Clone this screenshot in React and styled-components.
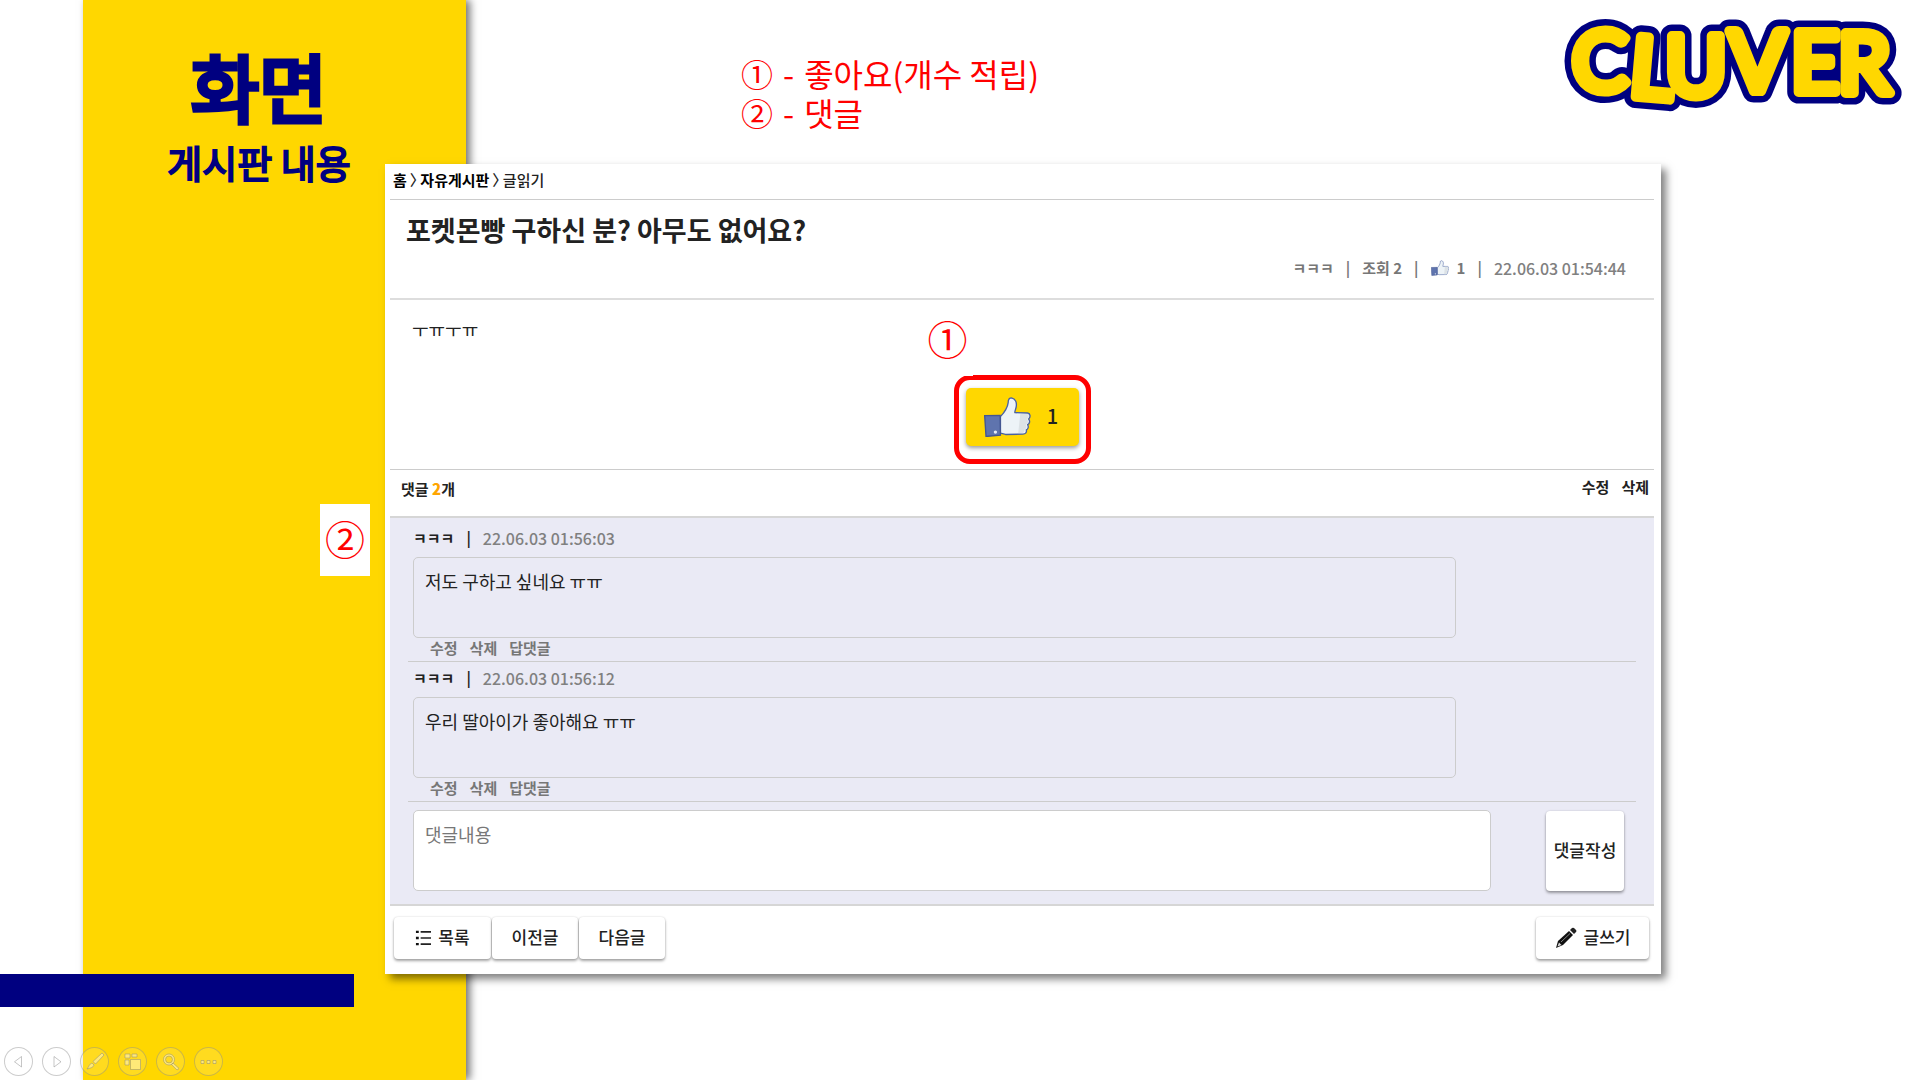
import React from 'react';
import styled, { createGlobalStyle } from 'styled-components';

const GlobalStyle = createGlobalStyle`
	* {
		box-sizing: border-box;
	}

	body {
		margin: 0;
		background: white;
		color: #222;
		font-family: 'Noto Sans CJK KR', sans-serif;
	}

	button, textarea {
		font-family: inherit;
		color: inherit;
	}

	button {
		cursor: pointer;
	}
`

const Slide = styled.div`
	display: grid;
	grid-template-columns: 83px 302px 81px 1fr 259px;
	grid-template-rows: 164px auto 1fr;
	min-height: 100vh;
	overflow: hidden;
`

const Sidebar = styled.aside`
	grid-column: 2 / 4;
	grid-row: 1 / 4;
	display: flex;
	flex-direction: column;
	align-items: center;
	padding: 40px 31px 0 0;
	background: gold;
	box-shadow: 4px 0 8px rgba(0, 0, 0, 0.55);
	color: navy;
`

const SlideTitle = styled.h1`
	margin: 0;
	font-size: 74px;
	line-height: 90px;
	font-weight: 400;
	stroke-linejoin: round;
	-webkit-text-stroke: 5px navy;
`

const SlideSubtitle = styled.p`
	margin: 8px 0 0;
	font-size: 38px;
	line-height: 48px;
	font-weight: 400;
	stroke-linejoin: round;
	-webkit-text-stroke: 2px navy;
`

const Header = styled.header`
	grid-column: 4 / 6;
	grid-row: 1;
	display: flex;
	justify-content: space-between;
	align-items: flex-start;
	padding: 12px 20px 0 275px;
`

const Legend = styled.ul`
	margin: 0;
	padding: 42px 0 0;
	list-style: none;
	color: red;
	font-size: 32px;
	line-height: 39px;
	white-space: nowrap;

	li {
		display: flex;
		gap: 10px;
	}
`

const Board = styled.main`
	grid-column: 3 / 5;
	grid-row: 2;
	position: relative;
	z-index: 1;
	padding: 0 7px 15px 5px;
	background: white;
	box-shadow: 5px 5px 8px rgba(0, 0, 0, 0.5);
`

const Breadcrumb = styled.nav`
	display: flex;
	gap: 3px;
	height: 36px;
	padding: 5px 3px 0;
	border-bottom: 1px solid #ccc;
	font-size: 15px;
	line-height: 22px;
	font-weight: 500;

	a {
		color: black;
		font-weight: 700;
		text-decoration: none;
	}
`

const Chevron = styled.span`
	font-feature-settings: 'halt';
`

const PostHead = styled.div`
	height: 100px;
	padding: 10px 28px 0 16px;
	border-bottom: 2px solid #ddd;
`

const PostTitle = styled.h2`
	margin: 0;
	font-size: 27px;
	line-height: 40px;
	font-weight: 700;
`

const PostMeta = styled.div`
	display: flex;
	justify-content: flex-end;
	align-items: center;
	gap: 12px;
	margin-top: 6px;
	color: #777;
	font-size: 15px;
	line-height: 24px;
	font-weight: 700;

	span {
		display: flex;
		align-items: center;
		gap: 8px;
	}
`

const Time = styled.time`
	color: #808080;
	font-size: 16px;
	font-weight: 500;
`

const PostBody = styled.div`
	display: flex;
	flex-direction: column;
	height: 170px;
	padding: 15px 0 23px;
	border-bottom: 1px solid #ccc;

	p {
		margin: 0;
		padding: 0 22px;
		font-size: 18px;
		line-height: 28px;
	}
`

const LikeArea = styled.div`
	position: relative;
	align-self: center;
	margin-top: auto;
`

const LikeButton = styled.button`
	display: flex;
	align-items: center;
	justify-content: center;
	gap: 16px;
	width: 113px;
	height: 58px;
	padding: 0 7px 0 5px;
	border: 0;
	border-radius: 5px;
	background: gold;
	box-shadow: 0 2px 4px rgba(0, 0, 0, 0.4);
	font-size: 20px;
	font-weight: 500;

	span {
		padding-bottom: 4px;
	}
`

const Highlight = styled.div`
	position: absolute;
	inset: -13px -12px -18px -12px;
	border: 5px solid red;
	border-radius: 16px;
	pointer-events: none;
`

const Marker = styled.span`
	position: absolute;
	top: ${props => props.$top};
	left: ${props => props.$left};
	display: flex;
	align-items: center;
	justify-content: center;
	width: 50px;
	height: 72px;
	padding-bottom: 4px;
	background: white;
	color: red;
	font-size: 40px;
	line-height: 50px;
`

const CommentBar = styled.div`
	display: flex;
	justify-content: space-between;
	align-items: flex-start;
	height: 48px;
	padding: 7px 5px 0 11px;
	border-bottom: 2px solid #d6d6d6;
	font-size: 15px;
	line-height: 24px;
	font-weight: 700;

	b {
		color: orange;
	}
`

const TextButtons = styled.div`
	display: flex;
	gap: 12px;
	padding: ${props => props.$indent ? '0 17px' : '0'};
	color: ${props => props.$indent ? '#777' : 'inherit'};
`

const TextButton = styled.button`
	padding: 0;
	border: 0;
	background: none;
	font-size: 15px;
	line-height: 20px;
	font-weight: 700;
`

const Comments = styled.section`
	position: relative;
	padding: 0 18px 13px 18px;
	border-bottom: 2px solid #d6d6d6;
	background: #eaeaf5;
`

const Comment = styled.article`
	height: 140px;
	padding: 4px 0 0 5px;
	border-bottom: 1px solid #ccc;

	&:first-of-type {
		height: 144px;
		padding-top: 8px;
	}
`

const CommentMeta = styled.div`
	display: flex;
	gap: 12px;
	font-size: 15px;
	line-height: 24px;
	font-weight: 700;
`

const CommentText = styled.p`
	width: calc(100% - 180px);
	height: 81px;
	margin: 7px 0 0;
	padding: 9px 11px;
	border: 1px solid #ccc;
	border-radius: 5px;
	font-size: 18px;
	line-height: 28px;
`

const CommentForm = styled.form`
	display: flex;
	gap: 55px;
	padding: 8px 12px 0 5px;
`

const CommentInput = styled.textarea`
	flex: 1;
	height: 81px;
	padding: 9px 11px;
	border: 1px solid #ccc;
	border-radius: 5px;
	background: white;
	font-size: 18px;
	line-height: 28px;
	resize: none;

	&::placeholder {
		color: #777;
	}
`

const Actions = styled.div`
	display: flex;
	justify-content: space-between;
	padding: 11px 5px 0 4px;
`

const ButtonGroup = styled.div`
	display: flex;
	gap: 1px;
`

const Button = styled.button`
	display: flex;
	align-items: center;
	justify-content: center;
	gap: 7px;
	width: ${props => props.$width || '86px'};
	height: ${props => props.$tall ? '80px' : '42px'};
	margin-top: ${props => props.$tall ? '1px' : '0'};
	padding: 0;
	border: 0;
	border-radius: 4px;
	background: white;
	box-shadow: 0 2px 3px rgba(0, 0, 0, 0.35), 0 0 2px rgba(0, 0, 0, 0.15);
	font-size: 17px;
	font-weight: 500;
	white-space: nowrap;

	span {
		padding-bottom: 3px;
	}
`

const Footer = styled.footer`
	grid-column: 1 / 3;
	grid-row: 3;
	z-index: 1;
	display: flex;
	flex-direction: column;
	justify-content: space-between;
`

const Bar = styled.div`
	width: 354px;
	height: 33px;
	background: navy;
`

const Controls = styled.div`
	display: flex;
	gap: 9px;
	padding: 0 0 4px 4px;
`

const Control = styled.button`
	width: 29px;
	height: 29px;
	padding: 0;
	border: 1px solid rgba(128, 128, 128, 0.4);
	border-radius: 50%;
	background: rgba(255, 255, 255, 0.12);

	svg {
		display: block;
		fill: rgba(255, 255, 255, 0.4);
		stroke: rgba(128, 128, 128, 0.45);
	}
`

const LogoSvg = styled.svg`
	overflow: visible;
`

function Logo() {
	return (
		<LogoSvg width="344" height="98" viewBox="0 0 344 98" role="img" aria-label="CLUVER">
			<defs>
				<text
					id="logo-letters"
					x="16 72 109 173 235 282"
					y="79 84 84 79 80 81"
					rotate="0 5 0 0 0 0"
					fontFamily="Lato"
					fontWeight="400"
					fontSize="84"
					strokeLinejoin="round"
				>
					CLUVER
				</text>
			</defs>
			<use href="#logo-letters" fill="navy" stroke="navy" strokeWidth="23" />
			<use href="#logo-letters" fill="gold" stroke="gold" strokeWidth="10" />
		</LogoSvg>
	);
}

function Thumb({ width, height }) {
	return (
		<svg width={width} height={height} viewBox="0 0 140 118" aria-hidden="true">
			<path d="M49 58 C60 46 70 32 72 16 C72 4 76 2 82 2 C94 4 98 16 96 28 C95 36 91 42 92 46 L130 47 C139 49 139 60 133 65 C138 71 136 79 130 82 C134 89 131 95 126 97 C128 105 124 110 116 110 L64 111 L49 107 Z" fill="#edf3f7" stroke="#4a62a0" strokeWidth="4" strokeLinejoin="round" />
			<path d="M108 50 L128 50 C136 52 134 62 128 65 C134 72 131 79 124 82 C129 90 125 95 120 97 C121 104 118 107 112 107 L102 107 Z" fill="#dce2e6" />
			<path d="M2 55 L48 54 L49 113 L6 117 Z" fill="#5f74ae" stroke="#435691" strokeWidth="4" />
			<circle cx="34" cy="104" r="5" fill="#e6ecf5" />
		</svg>
	);
}

function ListIcon() {
	return (
		<svg width="16" height="16" viewBox="0 0 17 17" aria-hidden="true">
			<path d="M1 2h3M1 8.500h3M1 15h3" stroke="#111" strokeWidth="2.500" />
			<path d="M6 2h11M6 8.500h11M6 15h11" stroke="#222" strokeWidth="1.800" />
		</svg>
	);
}

function PencilIcon() {
	return (
		<svg width="22" height="22" viewBox="0 0 22 22" aria-hidden="true">
			<path d="M1 21 L3 14 L14 4 L18 8 L8 18 Z" fill="#111" />
			<path d="M2.500 19.500 L4 15.500 L6.500 18 Z" fill="#ddd" />
			<path d="M15 3 L17 1 Q18 .5 19 1 L21 3 Q22 4 21 5 L19 7 Z" fill="#222" />
			<path d="M6 15 L15 6.500" stroke="#888" strokeWidth="1" />
		</svg>
	);
}

const CONTROLS = [
	{ label: '이전', icon: <path d="M16.500 8.500v10.500l-7-5.200z" /> },
	{ label: '다음', icon: <path d="M11 8.500v10.500l7-5.200z" /> },
	{ label: '펜', icon: <path d="M21 5l2 2-8.500 9-2.500-2.500zM11 15l2 2c-1 3-4 3-7 4 2-2 2-5 5-6z" /> },
	{ label: '모든 슬라이드', icon: <path d="M6 6h5v4h-5zM13 6h5v3h-5zM6 12h4v5h-4zM11.500 11.500h10v10h-10z" /> },
	{
		label: '확대',
		icon: <path d="M12 6a5.500 5.500 0 1 0 0 11a5.500 5.500 0 1 0 0-11zM12 8a3.500 3.500 0 1 1 0 7a3.500 3.500 0 1 1 0-7zM16 15l6 5.500-2 1.500-5.500-5.500z" fillRule="evenodd" />,
	},
	{ label: '더 보기', icon: <path d="M6 12.500h3v3h-3zM12 12.500h3v3h-3zM18 12.500h3v3h-3z" /> },
];

const COMMENTS = [
	{ author: 'ㅋㅋㅋ', date: '22.06.03 01:56:03', text: '저도 구하고 싶네요 ㅠㅠ' },
	{ author: 'ㅋㅋㅋ', date: '22.06.03 01:56:12', text: '우리 딸아이가 좋아해요 ㅠㅠ' },
];

function App() {
	return (
		<Slide>
			<GlobalStyle />
			<Sidebar>
				<SlideTitle>화면</SlideTitle>
				<SlideSubtitle>게시판 내용</SlideSubtitle>
			</Sidebar>
			<Header>
				<Legend>
					<li><span>①</span><span>-</span><span>좋아요(개수 적립)</span></li>
					<li><span>②</span><span>-</span><span>댓글</span></li>
				</Legend>
				<Logo />
			</Header>
			<Board>
				<Breadcrumb>
					<a href="#home">홈</a>
					<Chevron>〉</Chevron>
					<a href="#board">자유게시판</a>
					<Chevron>〉</Chevron>
					<span>글읽기</span>
				</Breadcrumb>
				<PostHead>
					<PostTitle>포켓몬빵 구하신 분? 아무도 없어요?</PostTitle>
					<PostMeta>
						<span>ㅋㅋㅋ</span>
						<span>|</span>
						<span>조회 2</span>
						<span>|</span>
						<span><Thumb width="18" height="16" />1</span>
						<span>|</span>
						<Time>22.06.03 01:54:44</Time>
					</PostMeta>
				</PostHead>
				<PostBody>
					<p>ㅜㅠㅜㅠ</p>
					<LikeArea>
						<LikeButton type="button"><Thumb width="47" height="40" /><span>1</span></LikeButton>
						<Highlight />
						<Marker $top="-84px" $left="-43px">①</Marker>
					</LikeArea>
				</PostBody>
				<CommentBar>
					<span>댓글 <b>2</b>개</span>
					<TextButtons>
						<TextButton type="button">수정</TextButton>
						<TextButton type="button">삭제</TextButton>
					</TextButtons>
				</CommentBar>
				<Comments>
					<Marker $top="-14px" $left="-70px">②</Marker>
					{COMMENTS.map(comment => (
						<Comment key={comment.date}>
							<CommentMeta>
								<span>{comment.author}</span>
								<span>|</span>
								<Time>{comment.date}</Time>
							</CommentMeta>
							<CommentText>{comment.text}</CommentText>
							<TextButtons $indent>
								<TextButton type="button">수정</TextButton>
								<TextButton type="button">삭제</TextButton>
								<TextButton type="button">답댓글</TextButton>
							</TextButtons>
						</Comment>
					))}
					<CommentForm>
						<CommentInput placeholder="댓글내용" aria-label="댓글내용" />
						<Button type="button" $width="78px" $tall><span>댓글작성</span></Button>
					</CommentForm>
				</Comments>
				<Actions>
					<ButtonGroup>
						<Button type="button" $width="97px"><ListIcon /><span>목록</span></Button>
						<Button type="button"><span>이전글</span></Button>
						<Button type="button"><span>다음글</span></Button>
					</ButtonGroup>
					<Button type="button" $width="113px"><PencilIcon /><span>글쓰기</span></Button>
				</Actions>
			</Board>
			<Footer>
				<Bar />
				<Controls>
					{CONTROLS.map(control => (
						<Control key={control.label} type="button" aria-label={control.label}>
							<svg width="27" height="27" viewBox="0 0 27 27">{control.icon}</svg>
						</Control>
					))}
				</Controls>
			</Footer>
		</Slide>
	);
}

export default App;
